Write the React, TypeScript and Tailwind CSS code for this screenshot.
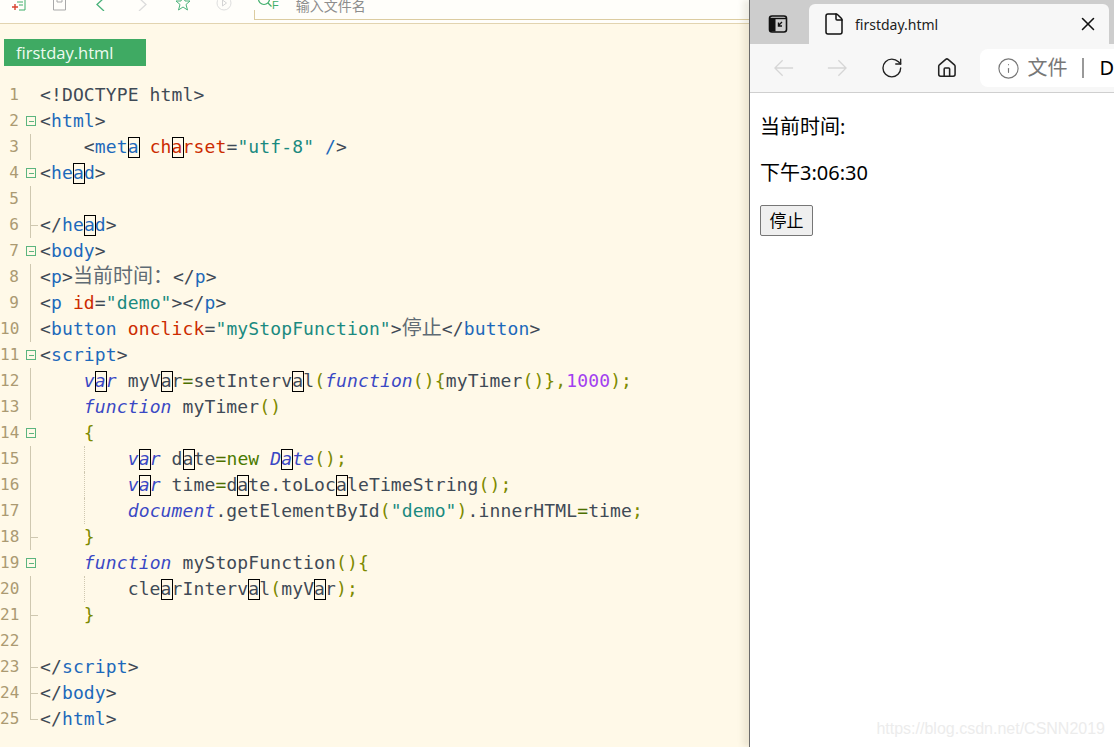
import React from "react";
import { File, House, Info, RotateCw, X } from "lucide-react";

type Token = [string, string];
type Fold = "box" | "line" | "tick" | "corner" | "none";

const gray = "text-[#3f4a56]";
const tag = "text-[#1d69bb]";
const attr = "text-[#cc2b00]";
const str = "text-[#1a8a80]";
const kw = "text-[#3a48c4] italic";
const paren = "text-[#7d8a00]";
const eq = "text-[#4c6f00]";
const num = "text-[#a23ff0]";
const green = "text-[#4a7a00]";
const cjk = "text-[#5f6b74]";

// [a] marks a letter with the search highlight box
const lines: { fold: Fold; guide?: boolean; tokens: Token[] }[] = [
  { fold: "none", tokens: [[gray, "<!DOCTYPE html>"]] },
  { fold: "box", tokens: [[gray, "<"], [tag, "html"], [gray, ">"]] },
  {
    fold: "line",
    tokens: [
      [gray, "    <"],
      [tag, "met[a]"],
      [gray, " "],
      [attr, "ch[a]rset"],
      [gray, "="],
      [str, '"utf-8"'],
      [gray, " "],
      [tag, "/"],
      [gray, ">"],
    ],
  },
  { fold: "box", tokens: [[gray, "<"], [tag, "he[a]d"], [gray, ">"]] },
  { fold: "line", tokens: [] },
  { fold: "tick", tokens: [[gray, "</"], [tag, "he[a]d"], [gray, ">"]] },
  { fold: "box", tokens: [[gray, "<"], [tag, "body"], [gray, ">"]] },
  {
    fold: "line",
    tokens: [
      [gray, "<"],
      [tag, "p"],
      [gray, ">"],
      ["cjk", "当前时间："],
      [gray, "</"],
      [tag, "p"],
      [gray, ">"],
    ],
  },
  {
    fold: "line",
    tokens: [
      [gray, "<"],
      [tag, "p"],
      [gray, " "],
      [attr, "id"],
      [gray, "="],
      [str, '"demo"'],
      [gray, "></"],
      [tag, "p"],
      [gray, ">"],
    ],
  },
  {
    fold: "line",
    tokens: [
      [gray, "<"],
      [tag, "button"],
      [gray, " "],
      [attr, "onclick"],
      [gray, "="],
      [str, '"myStopFunction"'],
      [gray, ">"],
      ["cjk", "停止"],
      [gray, "</"],
      [tag, "button"],
      [gray, ">"],
    ],
  },
  { fold: "box", tokens: [[gray, "<"], [tag, "script"], [gray, ">"]] },
  {
    fold: "line",
    tokens: [
      [gray, "    "],
      [kw, "v[a]r"],
      [gray, " myV[a]r"],
      [eq, "="],
      [gray, "setInterv[a]l"],
      [paren, "("],
      [kw, "function"],
      [paren, "(){"],
      [gray, "myTimer"],
      [paren, "()},"],
      [num, "1000"],
      [paren, ");"],
    ],
  },
  {
    fold: "line",
    tokens: [[gray, "    "], [kw, "function"], [gray, " myTimer"], [paren, "()"]],
  },
  { fold: "box", tokens: [[gray, "    "], [paren, "{"]] },
  {
    fold: "line",
    guide: true,
    tokens: [
      [gray, "        "],
      [kw, "v[a]r"],
      [gray, " d[a]te"],
      [eq, "="],
      [green, "new"],
      [gray, " "],
      [kw, "D[a]te"],
      [paren, "();"],
    ],
  },
  {
    fold: "line",
    guide: true,
    tokens: [
      [gray, "        "],
      [kw, "v[a]r"],
      [gray, " time"],
      [eq, "="],
      [gray, "d[a]te.toLoc[a]leTimeString"],
      [paren, "();"],
    ],
  },
  {
    fold: "line",
    guide: true,
    tokens: [
      [gray, "        "],
      [kw, "document"],
      [gray, ".getElementById"],
      [paren, "("],
      [str, '"demo"'],
      [paren, ")"],
      [gray, ".innerHTML"],
      [eq, "="],
      [gray, "time"],
      [paren, ";"],
    ],
  },
  { fold: "tick", tokens: [[gray, "    "], [paren, "}"]] },
  {
    fold: "box",
    tokens: [
      [gray, "    "],
      [kw, "function"],
      [gray, " myStopFunction"],
      [paren, "(){"],
    ],
  },
  {
    fold: "line",
    guide: true,
    tokens: [
      [gray, "        cle[a]rInterv[a]l"],
      [paren, "("],
      [gray, "myV[a]r"],
      [paren, ");"],
    ],
  },
  { fold: "tick", tokens: [[gray, "    "], [paren, "}"]] },
  { fold: "line", tokens: [] },
  { fold: "tick", tokens: [[gray, "</"], [tag, "script"], [gray, ">"]] },
  { fold: "tick", tokens: [[gray, "</"], [tag, "body"], [gray, ">"]] },
  { fold: "corner", tokens: [[gray, "</"], [tag, "html"], [gray, ">"]] },
];

const FoldMark = ({ type }: { type: Fold }) => {
  if (type === "none") return <div className="w-[20px] h-[26px]" />;
  return (
    <svg width="20" height="26" viewBox="0 0 20 26" shapeRendering="crispEdges">
      {type === "box" && (
        <>
          <rect x="6.5" y="8.5" width="9" height="9" fill="none" stroke="#5cb57f" />
          <path d="M8.5 13.5h5" stroke="#5cb57f" />
        </>
      )}
      {type === "line" && <path d="M10.5 0v26" stroke="#cfc8b0" />}
      {type === "tick" && <path d="M10.5 0v26M10.5 13.5h7" stroke="#cfc8b0" />}
      {type === "corner" && <path d="M10.5 0v13.5h7" fill="none" stroke="#cfc8b0" />}
    </svg>
  );
};

const TokenText = ({ cls, text }: { cls: string; text: string }) => {
  if (cls === "cjk") {
    return (
      <span className={`${cjk} text-[20px] leading-none tracking-normal font-['Noto_Sans_CJK_SC',sans-serif]`}>
        {text}
      </span>
    );
  }
  return (
    <span className={cls}>
      {text.split(/(\[a\])/).map((part, i) =>
        part === "[a]" ? (
          <span key={i} className="relative">
            a
            <span className="absolute left-0 top-[1px] w-[12px] h-[21px] border border-black" />
          </span>
        ) : (
          <React.Fragment key={i}>{part}</React.Fragment>
        )
      )}
    </span>
  );
};

const Toolbar = () => (
  <div className="flex items-end h-[24px] pb-[12px] pl-[10px] overflow-hidden bg-[#fffefa] border-b border-[#e2d4b0] shrink-0 relative">
    <svg width="16" height="16" viewBox="0 0 16 16" fill="none" className="shrink-0">
      <path d="M4 1h11v14H9" stroke="#3fae6a" />
      <path d="M7 4h6M7 7h6M9 10h4" stroke="#3fae6a" />
      <path d="M5 9v6M2 12h6" stroke="#d8432f" strokeWidth="1.4" />
    </svg>
    <svg width="16" height="16" viewBox="0 0 16 16" fill="none" className="ml-[25px] shrink-0">
      <path d="M2.5 1v14h12V1M6 1v6h5V1" stroke="#a9a9a9" />
    </svg>
    <svg width="12" height="16" viewBox="0 0 12 16" fill="none" className="ml-[28px] shrink-0">
      <path d="M9 3 2 9.500 9 16" stroke="#4ab27a" strokeWidth="1.3" />
    </svg>
    <svg width="12" height="16" viewBox="0 0 12 16" fill="none" className="ml-[29px] shrink-0">
      <path d="M3 3l7 6.500L3 16" stroke="#dcdcdc" strokeWidth="1.3" />
    </svg>
    <svg width="16" height="16" viewBox="0 0 16 16" fill="none" className="ml-[27px] shrink-0">
      <path d="M8 1l2 5h5l-4 3.500 1.500 5.500L8 12l-4.500 3L5 9.500 1 6h5z" stroke="#4ab27a" />
    </svg>
    <svg width="16" height="16" viewBox="0 0 16 16" fill="none" className="ml-[25px] shrink-0">
      <circle cx="8" cy="8" r="7" stroke="#dedede" />
      <path d="M6.500 5v6l4-3z" stroke="#d4d4d4" />
    </svg>
    <div className="relative flex-1 self-start h-[20px] ml-[22px] -mr-[1px] border-b border-[#dccca0] flex items-start">
      <span className="absolute left-0 bottom-0 h-[9px] w-px bg-[#dccca0]" />
      <svg width="16" height="12" viewBox="0 0 16 12" fill="none" className="ml-[3px] shrink-0 -mt-[4px]">
        <circle cx="7" cy="3" r="5.500" stroke="#3fae6a" strokeWidth="1.2" />
        <path d="M11 7l3.500 3.500" stroke="#3fae6a" strokeWidth="1.2" />
      </svg>
      <span className="text-[11px] leading-[11px] text-[#3fae6a] font-['Liberation_Sans',sans-serif] ml-[-1px]">F</span>
      <span className="ml-[17px] -mt-[5px] text-[14px] leading-[20px] text-[#8d8d8d] font-['Noto_Sans_CJK_SC',sans-serif]">输入文件名</span>
    </div>
  </div>
);

const Editor = () => (
  <div className="flex flex-col w-[749px] shrink-0 bg-[#fff9e8] h-full">
    <Toolbar />
    <div className="ml-[4px] mt-[15px] w-[142px] h-[27px] bg-[#3faa63] pl-[12px] text-[#eefaf0] text-[16.5px] leading-[27px] font-['Open_Sans',sans-serif]">
      firstday.html
    </div>
    <div className="mt-[16px] font-['DejaVu_Sans_Mono',monospace] text-[18px] leading-[26px] tracking-[0.125px]">
      {lines.map((line, i) => (
        <div key={i} className="relative flex h-[26px] whitespace-pre">
          <div className="w-[20px] pr-[1px] text-right text-[#ab9a72] text-[16px] tracking-normal">
            {i + 1}
          </div>
          <FoldMark type={line.fold} />
          {line.guide && (
            <span className="absolute left-[84px] top-0 h-[26px] border-l border-dotted border-[#cfc8b0]" />
          )}
          <div>
            {line.tokens.map(([cls, text], j) => (
              <TokenText key={j} cls={cls} text={text} />
            ))}
          </div>
        </div>
      ))}
    </div>
  </div>
);

const Browser = () => (
  <div className="relative flex-1 h-full flex flex-col bg-white border-l border-[#6b6b6b] shadow-[-6px_0_6px_rgba(90,80,40,0.1)] font-['Noto_Sans','Noto_Sans_CJK_SC',sans-serif] overflow-hidden">
    <div className="flex h-[44px] bg-[#cdcdcd] pt-[4px] shrink-0">
      <div className="w-[59px] flex items-center justify-center pr-[3px]">
        <svg width="20" height="20" viewBox="0 0 20 20" fill="none">
          <rect x="1.500" y="2" width="17" height="16" rx="2.500" stroke="#111" strokeWidth="1.6" />
          <path d="M2 4.500h16" stroke="#111" strokeWidth="1.4" />
          <rect x="2" y="4" width="5.500" height="13.500" fill="#111" />
          <path d="M14 8l-3.500 3.500M10.500 8.500v3.500h3.500" stroke="#111" strokeWidth="1.4" />
        </svg>
      </div>
      <div className="w-[300px] h-[40px] bg-[#f7f7f7] rounded-t-[6px] flex items-center pl-[13px]">
        <File size={24} strokeWidth={1.5} className="text-[#111]" />
        <span className="ml-[9px] text-[14px] text-[#222]">firstday.html</span>
        <X size={22} strokeWidth={1.7} className="ml-auto mr-[10px] text-[#111]" />
      </div>
    </div>
    <div className="flex items-center h-[49px] bg-[#f7f7f7] border-b border-[#cfcfcf] shrink-0 pl-[24px]">
      <svg width="22" height="20" viewBox="0 0 22 20" fill="none">
        <path d="M21 10H1M9.500 1.500 1 10l8.500 8.500" stroke="#d6d6d6" strokeWidth="1.4" />
      </svg>
      <svg width="22" height="20" viewBox="0 0 22 20" fill="none" className="ml-[33px]">
        <path d="M1 10h20M12.500 1.500 21 10l-8.500 8.500" stroke="#d6d6d6" strokeWidth="1.4" />
      </svg>
      <RotateCw size={26} strokeWidth={1.4} className="ml-[33px] text-[#222]" />
      <House size={24} strokeWidth={1.7} className="ml-[32px] text-[#222]" />
      <div className="ml-[23px] flex-1 h-[38px] bg-white rounded-l-[8px] flex items-center pl-[17px] whitespace-nowrap">
        <Info size={23} strokeWidth={1.2} className="text-[#777] shrink-0" />
        <span className="ml-[7px] text-[20px] leading-[38px] text-[#777]">文件</span>
        <span className="ml-[15px] w-[2px] h-[20px] bg-[#999] shrink-0" />
        <span className="ml-[15px] text-[20px] text-black">D</span>
      </div>
    </div>
    <div className="flex flex-col items-start pl-[10px] pt-[21px] text-[20px] leading-[26px] text-black">
      <p>当前时间:</p>
      <p className="mt-[20px]">下午3:06:30</p>
      <button className="mt-[19px] w-[53px] h-[31px] border border-[#767676] rounded-[2px] bg-[#efefef] text-[17px] leading-[29px] text-black">
        停止
      </button>
    </div>
    <span className="absolute right-[9px] bottom-[8px] text-[16px] leading-[20px] text-[#ececec] font-['Liberation_Sans',sans-serif]">
      https://blog.csdn.net/CSNN2019
    </span>
  </div>
);

export default function App() {
  return (
    <div className="flex w-[1114px] h-[747px] overflow-hidden bg-[#fff9e8]">
      <Editor />
      <Browser />
    </div>
  );
}
